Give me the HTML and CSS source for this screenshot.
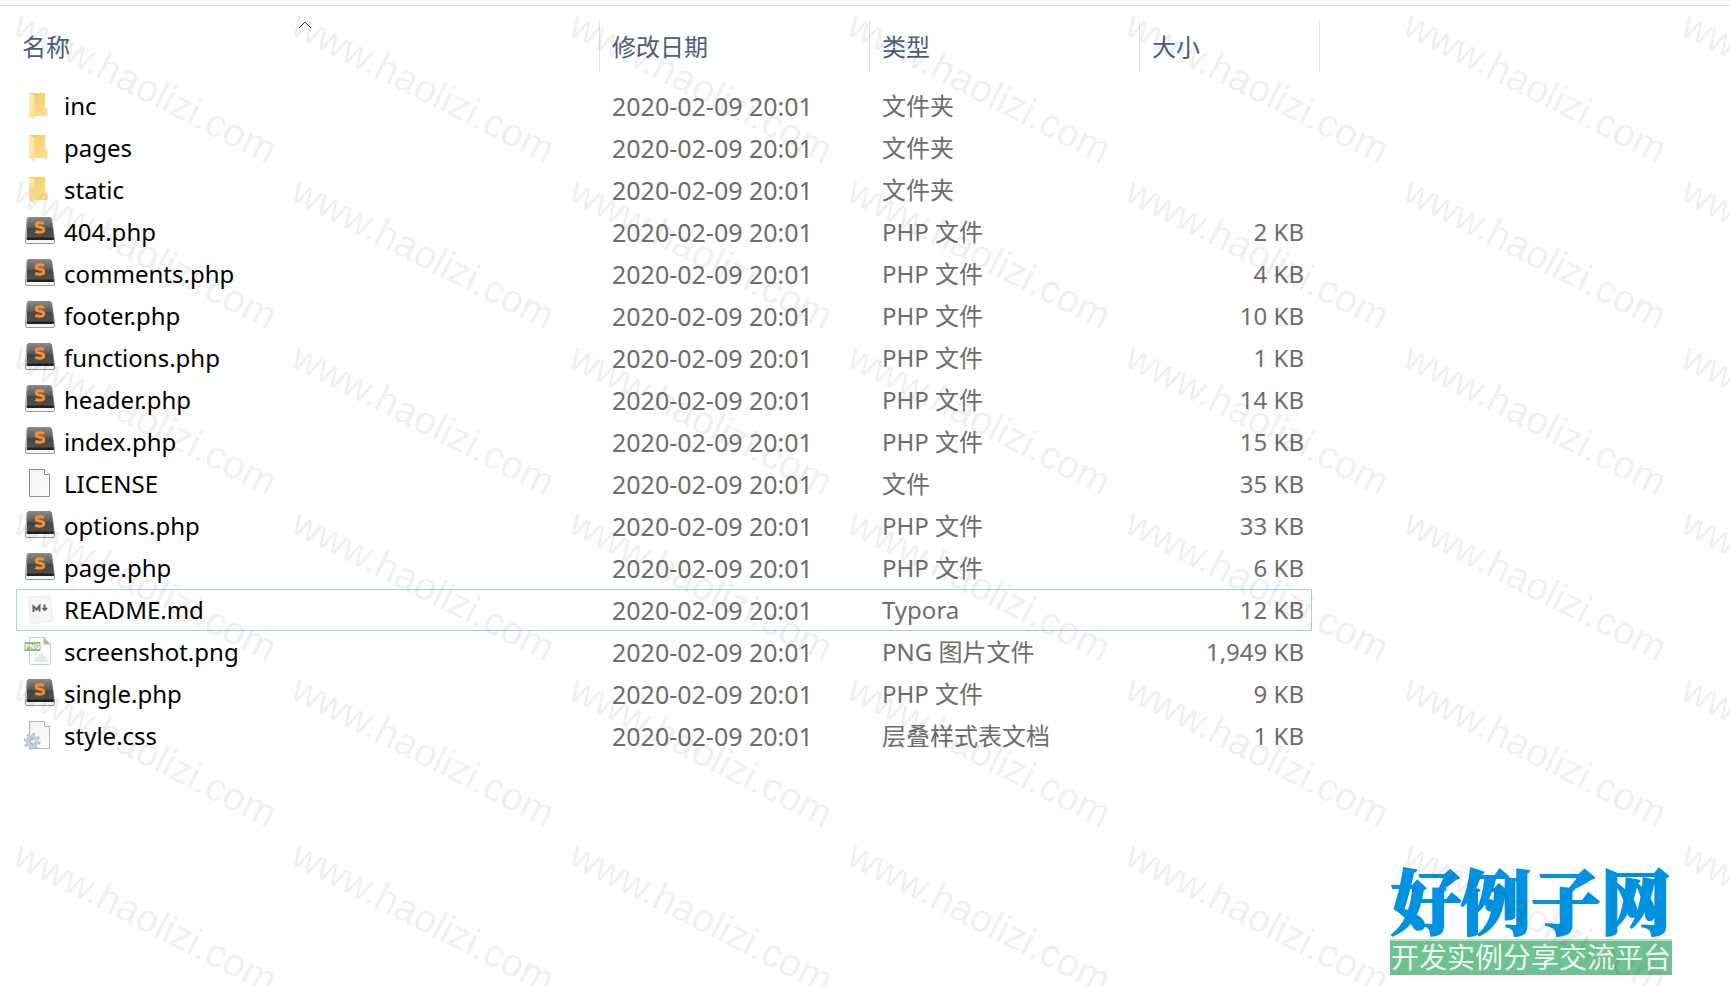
FILE: index.html
```html
<!DOCTYPE html>
<html lang="zh-CN">
<head>
    <meta charset="UTF-8">
    <meta name="viewport" content="width=device-width, initial-scale=1.0">
    <title>文件列表</title>
    <link rel="stylesheet" href="styles.css">
</head>
<body>

    <svg class="sprite" aria-hidden="true">
        <defs>
            <linearGradient id="folderBack" x1="0" y1="0" x2="1" y2="1">
                <stop offset="0" stop-color="#eecb6c"/>
                <stop offset="1" stop-color="#ffe08a"/>
            </linearGradient>
            <linearGradient id="folderFront" x1="0" y1="0" x2="1" y2="1">
                <stop offset="0" stop-color="#ffeeb8"/>
                <stop offset="1" stop-color="#fbdc8c"/>
            </linearGradient>
            <linearGradient id="keyTop" x1="0" y1="0" x2="0" y2="1">
                <stop offset="0" stop-color="#8a8a8a"/>
                <stop offset="0.45" stop-color="#5c5c5c"/>
                <stop offset="0.5" stop-color="#484848"/>
                <stop offset="1" stop-color="#505050"/>
            </linearGradient>
            <linearGradient id="paper" x1="0" y1="0" x2="1" y2="1">
                <stop offset="0" stop-color="#f2f3f4"/>
                <stop offset="1" stop-color="#fcfcfc"/>
            </linearGradient>
        </defs>
        <symbol id="folder" viewBox="0 0 32 32">
            <path d="M5 3H21V17L23.500 19V26H10V6Z" fill="url(#folderBack)"/>
            <path d="M5 3L10.500 7V29.500L5 26Z" fill="url(#folderFront)"/>
        </symbol>
        <symbol id="sublime" viewBox="0 0 32 32">
            <path d="M5 1.500H25.500Q27.300 1.500 27.700 3.500L30.500 23V26Q30.500 27.500 29 27.500H3Q1.500 27.500 1.500 26V23L3 3.500Q3.300 1.500 5 1.500Z" fill="#f4f4f4" stroke="#9a9a9a"/>
            <path d="M5 1H25.500Q27.300 1 27.700 3L29.800 20V24H2.800V20L3.300 3Q3.500 1 5 1Z" fill="url(#keyTop)"/>
            <path d="M2.800 21.500H29.800V24H2.800Z" fill="#222"/>
            <path d="M20 7.700C17.500 6.300 12.300 6 12.300 9C12.300 12.300 19.800 10.300 19.800 13.700C19.800 17 14 16.600 11.500 15.100" fill="none" stroke="#f98d2b" stroke-width="3"/>
        </symbol>
        <symbol id="blank" viewBox="0 0 32 32">
            <path d="M5.500 1.500H20.500L25.500 6.500V28.500H5.500Z" fill="url(#paper)" stroke="#8f8f8f"/>
            <path d="M20.500 1.500V6.500H25.500" fill="#fff" stroke="#8f8f8f"/>
        </symbol>
        <symbol id="markdown" viewBox="0 0 32 32">
            <path d="M4 3.500L26 1.500L29 27L7 30Z" fill="#f5f5f5" stroke="#ececec"/>
            <path d="M9.500 18V12.500L12.500 15.500L15.500 12V17.500" fill="none" stroke="#636363" stroke-width="2"/>
            <path d="M20.500 10.500V15" stroke="#636363" stroke-width="2"/>
            <path d="M17.500 14L20.800 17.500L24 13.700Z" fill="#636363"/>
        </symbol>
        <symbol id="png" viewBox="0 0 32 32">
            <path d="M7 1.500H20L26.500 8V26.500Q26.500 28.500 24.500 28.500H7.500Q5.500 28.500 5.500 26.500V3Q5.500 1.500 7 1.500Z" fill="#fff" stroke="#bedabb"/>
            <path d="M19.500 1.500L26.500 8.500H19.500Z" fill="#a0c68e"/>
            <path d="M9 26Q10 21 14 20.500Q17 13.500 20 20Q23 20.500 23.500 26Z" fill="#dcefe5"/>
            <circle cx="12" cy="18" r="1.500" fill="#dcefe5"/>
            <path d="M0.500 6H16.500V15H0.500Z" fill="#93bb7b"/>
            <text class="badge" x="1" y="13">PNG</text>
        </symbol>
        <symbol id="css" viewBox="0 0 32 32">
            <path d="M5.500 1.500H20.500L25.500 6.500V28.500H5.500Z" fill="url(#paper)" stroke="#b4b4b4"/>
            <path d="M20.500 1.500V6.500H25.500" fill="#fff" stroke="#b4b4b4"/>
            <circle cx="8" cy="21.500" r="7" fill="none" stroke="#b4c3d0" stroke-width="3" stroke-dasharray="2.800 2.700"/>
            <circle cx="8" cy="21.500" r="4.500" fill="#eef2f5" stroke="#c3d0db" stroke-width="4"/>
            <path d="M9.500 19Q6 18.500 6 21.500Q6 24.500 9.500 24" fill="none" stroke="#8294a5"/>
        </symbol>
    </svg>

    <main class="explorer">
        <table class="files">
            <colgroup>
                <col>
                <col class="col-date">
                <col class="col-type">
                <col class="col-size">
                <col class="col-end">
            </colgroup>
            <thead>
                <tr>
                    <th>
                        <button type="button">名称</button>
                        <svg class="sort" viewBox="0 0 14 8" aria-hidden="true"><path d="M1 7L7 1L13 7" fill="none" stroke="#333"/></svg>
                    </th>
                    <th><button type="button">修改日期</button></th>
                    <th><button type="button">类型</button></th>
                    <th colspan="2"><button type="button">大小</button></th>
                </tr>
            </thead>
            <tbody>
                <tr><td><div class="name"><svg><use href="#folder"/></svg>inc</div></td><td>2020-02-09 20:01</td><td>文件夹</td><td></td></tr>
                <tr><td><div class="name"><svg><use href="#folder"/></svg>pages</div></td><td>2020-02-09 20:01</td><td>文件夹</td><td></td></tr>
                <tr><td><div class="name"><svg><use href="#folder"/></svg>static</div></td><td>2020-02-09 20:01</td><td>文件夹</td><td></td></tr>
                <tr><td><div class="name"><svg><use href="#sublime"/></svg>404.php</div></td><td>2020-02-09 20:01</td><td>PHP 文件</td><td>2 KB</td></tr>
                <tr><td><div class="name"><svg><use href="#sublime"/></svg>comments.php</div></td><td>2020-02-09 20:01</td><td>PHP 文件</td><td>4 KB</td></tr>
                <tr><td><div class="name"><svg><use href="#sublime"/></svg>footer.php</div></td><td>2020-02-09 20:01</td><td>PHP 文件</td><td>10 KB</td></tr>
                <tr><td><div class="name"><svg><use href="#sublime"/></svg>functions.php</div></td><td>2020-02-09 20:01</td><td>PHP 文件</td><td>1 KB</td></tr>
                <tr><td><div class="name"><svg><use href="#sublime"/></svg>header.php</div></td><td>2020-02-09 20:01</td><td>PHP 文件</td><td>14 KB</td></tr>
                <tr><td><div class="name"><svg><use href="#sublime"/></svg>index.php</div></td><td>2020-02-09 20:01</td><td>PHP 文件</td><td>15 KB</td></tr>
                <tr><td><div class="name"><svg><use href="#blank"/></svg>LICENSE</div></td><td>2020-02-09 20:01</td><td>文件</td><td>35 KB</td></tr>
                <tr><td><div class="name"><svg><use href="#sublime"/></svg>options.php</div></td><td>2020-02-09 20:01</td><td>PHP 文件</td><td>33 KB</td></tr>
                <tr><td><div class="name"><svg><use href="#sublime"/></svg>page.php</div></td><td>2020-02-09 20:01</td><td>PHP 文件</td><td>6 KB</td></tr>
                <tr class="focused"><td><div class="name"><svg><use href="#markdown"/></svg>README.md</div></td><td>2020-02-09 20:01</td><td>Typora</td><td>12 KB</td></tr>
                <tr><td><div class="name"><svg><use href="#png"/></svg>screenshot.png</div></td><td>2020-02-09 20:01</td><td>PNG 图片文件</td><td>1,949 KB</td></tr>
                <tr><td><div class="name"><svg><use href="#sublime"/></svg>single.php</div></td><td>2020-02-09 20:01</td><td>PHP 文件</td><td>9 KB</td></tr>
                <tr><td><div class="name"><svg><use href="#css"/></svg>style.css</div></td><td>2020-02-09 20:01</td><td>层叠样式表文档</td><td>1 KB</td></tr>
            </tbody>
        </table>
    </main>

    <div class="logo">
        <div class="logo-name">好例子网</div>
        <div class="logo-slogan">开发实例分享交流平台</div>
    </div>

    <div class="watermark" id="watermark" aria-hidden="true"></div>

    <script>
        const watermark = document.getElementById("watermark");
        const cols = Math.ceil(window.innerWidth / 278);
        const rows = Math.ceil(window.innerHeight / 166);

        watermark.style.setProperty("--cols", cols);
        for (let i = 0; i < cols * rows; i++) {
            const mark = document.createElement("span");
            mark.textContent = "www.haolizi.com";
            watermark.appendChild(mark);
        }
    </script>

</body>
</html>
```
FILE: styles.css
```css
* {
    margin: 0;
    padding: 0;
    box-sizing: border-box;
}

body {
    position: relative;
    min-height: 100vh;
    background: #fff;
    color: #6d6d6d;
    font-family: "Noto Sans", "Noto Sans CJK SC", sans-serif;
    font-size: 24px;
    line-height: 32px;
    overflow: hidden;
}

.sprite {
    position: absolute;
    width: 0;
    height: 0;
}

.badge {
    font-family: "Noto Sans", sans-serif;
    font-size: 7px;
    font-weight: bold;
    fill: #fff;
}

.explorer {
    margin-top: 5px;
    padding: 15px 410px 0 16px;
    border-top: 1px solid #d9d9d9;
}

.files {
    width: 100%;
    table-layout: fixed;
    border-collapse: separate;
    border-spacing: 0;
}

.col-date,
.col-type {
    width: 270px;
}

.col-size {
    width: 172px;
}

.col-end {
    width: 8px;
}

.files th {
    position: relative;
    height: 64px;
    padding: 10px 6px 0;
    vertical-align: top;
    text-align: left;
    background: linear-gradient(#e2e2e2, #e2e2e2) right top / 1px 51px no-repeat;
}

.files th + th {
    padding-left: 12px;
}

.files button {
    border: none;
    background: none;
    color: #4c607a;
    font: inherit;
    font-weight: normal;
    cursor: pointer;
}

.sort {
    position: absolute;
    top: 0;
    left: calc(50% - 10px);
    width: 14px;
    height: 8px;
}

.files td {
    height: 42px;
    padding-left: 12px;
    border: 1px solid transparent;
    border-width: 1px 0;
    white-space: nowrap;
}

.files td:first-child {
    padding-left: 7px;
    border-left-width: 1px;
    color: #000;
}

.files td:nth-child(2) {
    font-size: 25px;
}

.files td:nth-child(4) {
    padding-right: 7px;
    border-right-width: 1px;
    text-align: right;
}

.focused td {
    border-color: #99d1ff;
}

.name {
    display: flex;
    align-items: center;
    gap: 8px;
}

.name svg {
    width: 32px;
    height: 32px;
}

.logo {
    position: absolute;
    right: 58px;
    bottom: 11px;
    width: 282px;
    text-align: center;
    white-space: nowrap;
}

.logo-name {
    padding-bottom: 2px;
    color: #0092e0;
    font-family: "Noto Serif CJK SC", "Noto Sans CJK SC", serif;
    font-size: 70px;
    font-weight: 900;
    line-height: 76px;
    -webkit-text-stroke: 2px #0092e0;
}

.logo-slogan {
    padding-bottom: 4px;
    background: #70c191;
    border-top: 2px solid #b5dfc5;
    color: #eef9f2;
    font-family: "Noto Sans CJK SC", sans-serif;
    font-size: 28px;
    line-height: 30px;
}

.watermark {
    position: absolute;
    inset: 0;
    display: grid;
    grid-template-columns: repeat(var(--cols), 278px);
    grid-auto-rows: 166px;
    padding: 4px 0 0 26px;
    overflow: hidden;
    pointer-events: none;
    color: rgba(0, 0, 0, 0.08);
    font-family: "Liberation Sans", Arial, sans-serif;
    font-size: 39px;
    line-height: 40px;
}

.watermark span {
    transform: rotate(27deg);
    transform-origin: left top;
    white-space: nowrap;
}
```
